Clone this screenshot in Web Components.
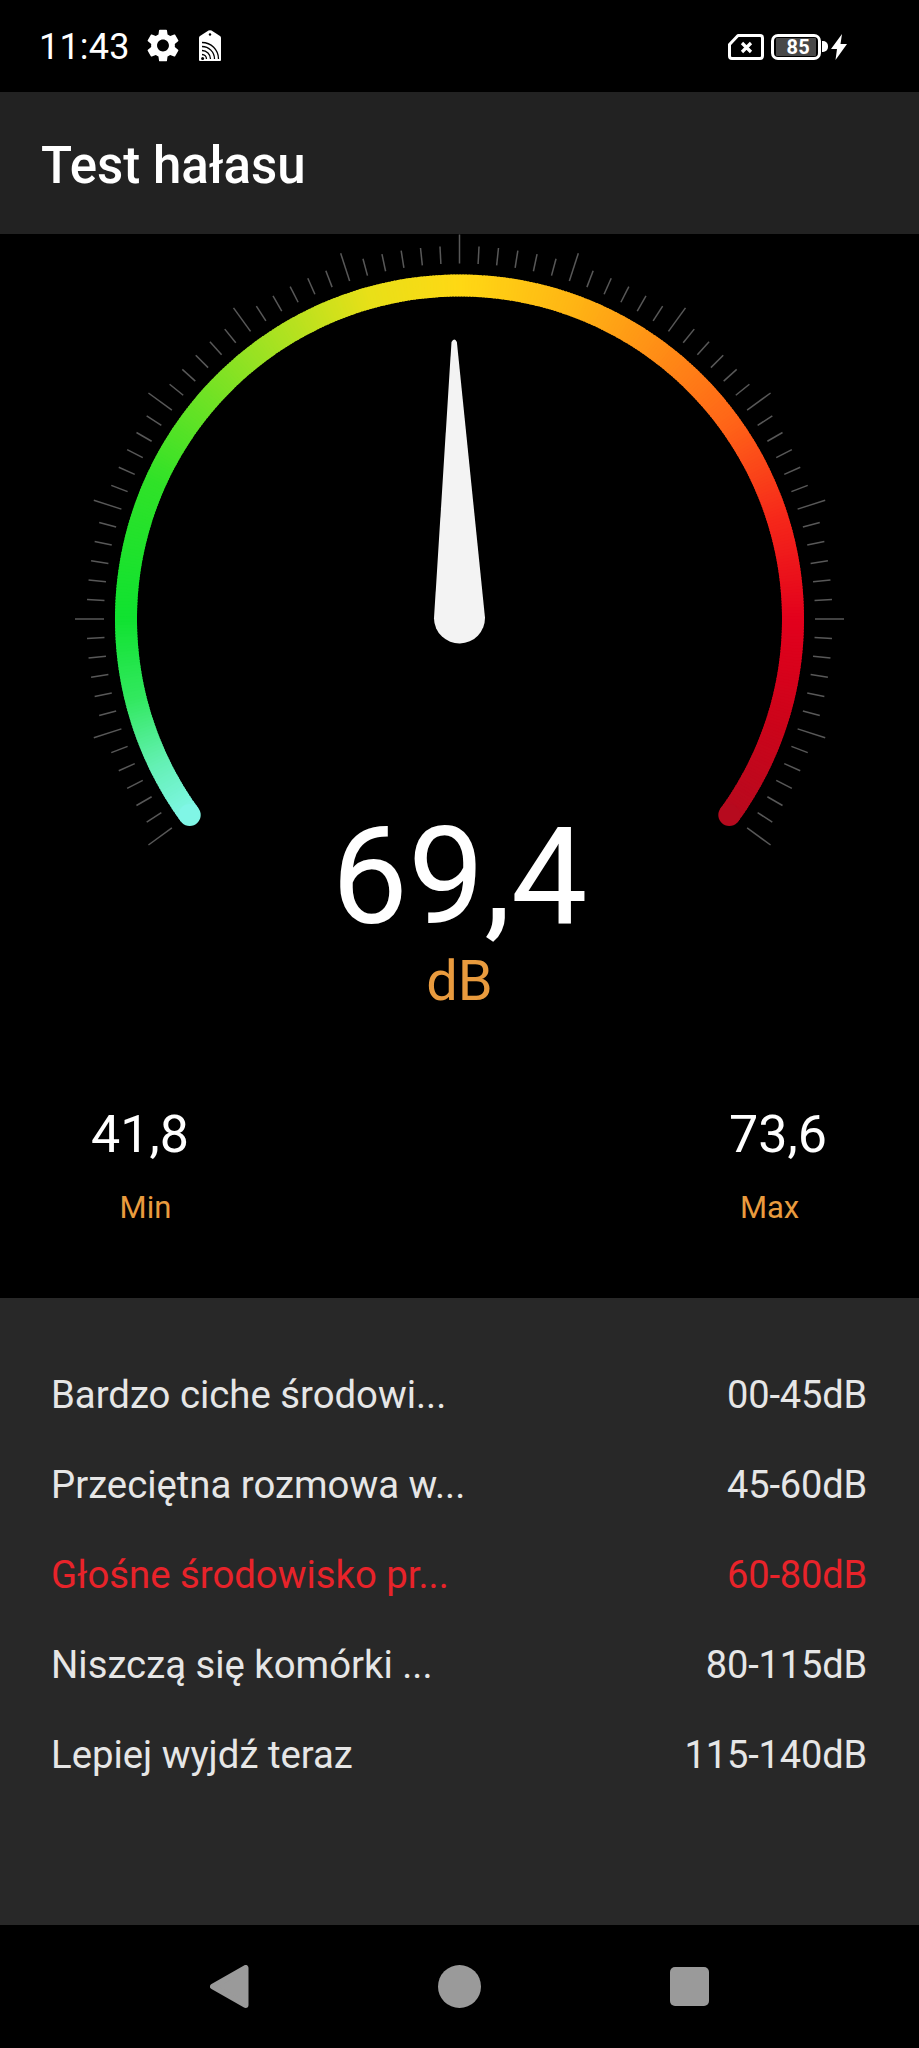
<!DOCTYPE html>
<html lang="pl">
<head>
<meta charset="utf-8">
<title>Test hałasu</title>
<style>
  html, body { margin: 0; background: #000; }
  body { width: 919px; height: 2048px; display: flex; flex-direction: column; font-family: Roboto, "Liberation Sans", sans-serif; color: #fff; }
</style>
</head>
<body>
<status-bar time="11:43"></status-bar>
<app-header>Test hałasu</app-header>
<noise-gauge value="69,4" unit="dB" min="41,8" max="73,6"></noise-gauge>
<range-list>
  <range-row range="00-45dB">Bardzo ciche środowi...</range-row>
  <range-row range="45-60dB">Przeciętna rozmowa w...</range-row>
  <range-row range="60-80dB" active>Głośne środowisko pr...</range-row>
  <range-row range="80-115dB">Niszczą się komórki ...</range-row>
  <range-row range="115-140dB">Lepiej wyjdź teraz</range-row>
</range-list>
<nav-bar></nav-bar>

<script>
class StatusBar extends HTMLElement {
  connectedCallback() {
    this.attachShadow({ mode: 'open' });
    this.shadowRoot.innerHTML = `
      <style>
        :host { display: flex; align-items: center; height: 92px; padding: 0 72px 0 39px; box-sizing: border-box; background: #000; color: #fff; }
        .time { font-size: 36px; line-height: 36px; letter-spacing: 0.2px; margin-top: 2px; }
        .gear { margin-left: 17px; margin-top: -2px; display: block; }
        .tag { margin-left: 20px; margin-top: -1px; display: block; }
        .right { margin-left: auto; display: flex; align-items: center; margin-top: 1px; }
        .battery { position: relative; box-sizing: border-box; width: 50px; height: 26px; margin-left: 7px; border: 3px solid #fff; border-radius: 7px; padding: 1px 2px; display: flex; }
        .fill { flex: 1; background: #484848; font-size: 20px; font-weight: 700; line-height: 18px; text-align: right; padding-right: 6px; border-radius: 1px; letter-spacing: 0.3px; }
        .nub { width: 6px; height: 11px; background: #fff; border-radius: 0 5px 5px 0; margin-left: 1px; }
        .bolt { margin-left: 3px; display: block; }
      </style>
      <span class="time">${this.getAttribute('time')}</span>
      <svg class="gear" width="32" height="33" viewBox="2.5 2 19 20" fill="#fff"><path d="M19.14 12.94c.04-.3.06-.61.06-.94 0-.32-.02-.64-.07-.94l2.03-1.58c.18-.14.23-.41.12-.61l-1.92-3.32c-.12-.22-.37-.29-.59-.22l-2.39.96c-.5-.38-1.03-.7-1.62-.94l-.36-2.54c-.04-.24-.24-.41-.48-.41h-3.84c-.24 0-.43.17-.47.41l-.36 2.54c-.59.24-1.13.57-1.62.94l-2.39-.96c-.22-.08-.47 0-.59.22L2.74 8.87c-.12.21-.08.47.12.61l2.03 1.58c-.05.3-.09.63-.09.94s.02.64.07.94l-2.03 1.58c-.18.14-.23.41-.12.61l1.92 3.32c.12.22.37.29.59.22l2.39-.96c.5.38 1.03.7 1.62.94l.36 2.54c.05.24.24.41.48.41h3.84c.24 0 .44-.17.47-.41l.36-2.54c.59-.24 1.13-.56 1.62-.94l2.39.96c.22.08.47 0 .59-.22l1.92-3.32c.12-.22.07-.47-.12-.61l-2.01-1.58zM12 15.6c-1.98 0-3.6-1.62-3.6-3.6s1.62-3.6 3.6-3.6 3.6 1.62 3.6 3.6-1.62 3.6-3.6 3.6z"/></svg>
      <svg class="tag" width="22" height="32" viewBox="0 0 22 32">
        <path d="M9.5 .6 Q11 -.2 12.5 .6 L21 6 Q22 6.7 22 8 V30 Q22 31 21 31 H1 Q0 31 0 30 V8 Q0 6.7 1 6 Z" fill="#fff"/>
        <circle cx="11" cy="4.5" r="1.2" fill="#000"/>
        <g fill="none" stroke="#000" stroke-width="1.3">
          <path d="M3 24.5 A4.5 4.5 0 0 1 7.5 29"/>
          <path d="M3 20.5 A8.5 8.5 0 0 1 11.5 29"/>
          <path d="M3 16.5 A12.5 12.5 0 0 1 15.5 29"/>
          <path d="M3 12.5 A16.5 16.5 0 0 1 19.5 29"/>
        </g>
        <circle cx="3.6" cy="28.4" r="1.5" fill="#000"/>
      </svg>
      <div class="right">
        <svg width="36" height="26" viewBox="0 0 36 26">
          <path d="M10 1.5 H32 Q34.5 1.5 34.5 4 V22 Q34.5 24.5 32 24.5 H4 Q1.5 24.5 1.5 22 V10.5 Z" fill="none" stroke="#fff" stroke-width="3" stroke-linejoin="round"/>
          <path d="M14 9 L23 18 M23 9 L14 18" stroke="#fff" stroke-width="3.2" fill="none"/>
        </svg>
        <div class="battery"><div class="fill">85</div></div>
        <div class="nub"></div>
        <svg class="bolt" width="16" height="26" viewBox="0 0 16 26"><path d="M11 0 L0 15 H6 L4.5 26 L16 10 H9.5 Z" fill="#fff"/></svg>
      </div>
    `;
  }
}

class AppHeader extends HTMLElement {
  connectedCallback() {
    this.attachShadow({ mode: 'open' });
    this.shadowRoot.innerHTML = `
      <style>
        :host { display: flex; align-items: center; height: 142px; padding: 4px 41px 0; box-sizing: border-box; background: #222; color: #fff; font-size: 51px; font-weight: 500; }
      </style>
      <slot></slot>
    `;
  }
}

class NoiseGauge extends HTMLElement {
  connectedCallback() {
    this.attachShadow({ mode: 'open' });
    const cx = 459.5, cy = 385;
    const point = (deg, r) => {
      const a = (deg - 90) * Math.PI / 180;
      return [(cx + r * Math.cos(a)).toFixed(2), (cy + r * Math.sin(a)).toFixed(2)];
    };

    // ticks every 3 degrees, long one every 18
    let ticks = '';
    for (let i = 0; i <= 84; i++) {
      const deg = -126 + i * 3;
      const p1 = point(deg, 355.5);
      const p2 = point(deg, i % 6 === 0 ? 384.5 : 373);
      ticks += `<line x1="${p1[0]}" y1="${p1[1]}" x2="${p2[0]}" y2="${p2[1]}"/>`;
    }

    // gradient along the arc, drawn as short overlapping pieces
    const stops = [
      [0, [128, 246, 230]], [10, [100, 240, 180]], [22, [50, 232, 95]], [36, [16, 226, 48]],
      [60, [48, 226, 40]], [90, [160, 226, 34]], [110, [232, 224, 24]], [126, [255, 216, 20]],
      [146, [255, 180, 20]], [162, [255, 142, 22]], [180, [255, 100, 24]], [198, [246, 40, 26]],
      [216, [226, 0, 28]], [234, [204, 4, 26]], [252, [182, 10, 30]]
    ];
    const colorAt = t => {
      for (let i = 1; i < stops.length; i++) {
        if (t <= stops[i][0]) {
          const [t0, c0] = stops[i - 1], [t1, c1] = stops[i];
          const k = (t - t0) / (t1 - t0);
          return `rgb(${c0.map((v, n) => Math.round(v + (c1[n] - v) * k)).join(',')})`;
        }
      }
      return 'rgb(182,10,30)';
    };
    let arc = '';
    for (let t = 0; t < 252; t += 0.5) {
      const a = point(-126 + t, 333.5);
      const b = point(-126 + t + 0.7, 333.5);
      arc += `<path d="M${a[0]} ${a[1]} A333.5 333.5 0 0 1 ${b[0]} ${b[1]}" stroke="${colorAt(t)}"/>`;
    }
    const start = point(-126, 333.5), end = point(126, 333.5);

    this.shadowRoot.innerHTML = `
      <style>
        :host { display: flex; flex-direction: column; align-items: center; height: 1064px; background: #000; }
        svg { display: block; width: 919px; height: 575px; overflow: visible; flex: none; }
        .ticks line { stroke: #585858; stroke-width: 1.5; }
        .arc path { fill: none; stroke-width: 22; }
        .value { font-size: 136px; line-height: 136px; color: #fff; }
        .unit { font-size: 56px; line-height: 56px; margin-top: 8px; color: #e99b3e; }
        .stats { align-self: stretch; display: flex; justify-content: space-between; margin-top: 100px; padding: 0 92px 0 91px; }
        .stat { display: flex; flex-direction: column; align-items: center; }
        .stat b { font-size: 52px; line-height: 52px; font-weight: 400; color: #fff; }
        .stat span { font-size: 31px; line-height: 30px; margin-top: 32px; color: #e99b3e; }
        .stat.min span { margin-left: 11px; }
        .stat.max span { margin-right: 17px; }
      </style>
      <svg viewBox="0 0 919 575">
        <g class="ticks">${ticks}</g>
        <g class="arc">${arc}</g>
        <circle cx="${start[0]}" cy="${start[1]}" r="11" fill="${colorAt(0)}"/>
        <circle cx="${end[0]}" cy="${end[1]}" r="11" fill="${colorAt(252)}"/>
        <path transform="rotate(-1.1 ${cx} ${cy})" fill="#f3f3f3" d="M456.8 108 Q459.5 103 462.2 108 L485 384 A25.5 25.5 0 0 1 434 384 Z"/>
      </svg>
      <div class="value">${this.getAttribute('value')}</div>
      <div class="unit">${this.getAttribute('unit')}</div>
      <div class="stats">
        <div class="stat min"><b>${this.getAttribute('min')}</b><span>Min</span></div>
        <div class="stat max"><b>${this.getAttribute('max')}</b><span>Max</span></div>
      </div>
    `;
  }
}

class RangeList extends HTMLElement {
  connectedCallback() {
    this.attachShadow({ mode: 'open' });
    this.shadowRoot.innerHTML = `
      <style>
        :host { display: flex; flex-direction: column; height: 627px; box-sizing: border-box; padding: 52px 52px 0 51px; background: #282828; }
      </style>
      <slot></slot>
    `;
  }
}

class RangeRow extends HTMLElement {
  connectedCallback() {
    this.attachShadow({ mode: 'open' });
    this.shadowRoot.innerHTML = `
      <style>
        :host { display: flex; justify-content: space-between; height: 90px; line-height: 90px; font-size: 38px; color: #e6e6e6; }
        :host([active]) { color: #e8232a; }
        .label { font-size: 38.3px; }
        .range { letter-spacing: -0.15px; }
      </style>
      <span class="label"><slot></slot></span>
      <span class="range">${this.getAttribute('range')}</span>
    `;
  }
}

class NavBar extends HTMLElement {
  connectedCallback() {
    this.attachShadow({ mode: 'open' });
    this.shadowRoot.innerHTML = `
      <style>
        :host { display: flex; align-items: center; gap: 189px; height: 123px; padding: 0 0 0 210px; box-sizing: border-box; background: #000; }
        svg { display: block; }
      </style>
      <svg width="39" height="43" viewBox="0 0 39 43"><path d="M35.5 3 V40 L3 21.5 Z" fill="#9a9a9a" stroke="#9a9a9a" stroke-width="6" stroke-linejoin="round"/></svg>
      <svg width="43" height="43" viewBox="0 0 43 43"><circle cx="21.5" cy="21.5" r="21.5" fill="#9a9a9a"/></svg>
      <svg width="39" height="39" viewBox="0 0 39 39"><rect width="39" height="39" rx="5" fill="#9a9a9a"/></svg>
    `;
  }
}

customElements.define('status-bar', StatusBar);
customElements.define('app-header', AppHeader);
customElements.define('noise-gauge', NoiseGauge);
customElements.define('range-list', RangeList);
customElements.define('range-row', RangeRow);
customElements.define('nav-bar', NavBar);
</script>
</body>
</html>
